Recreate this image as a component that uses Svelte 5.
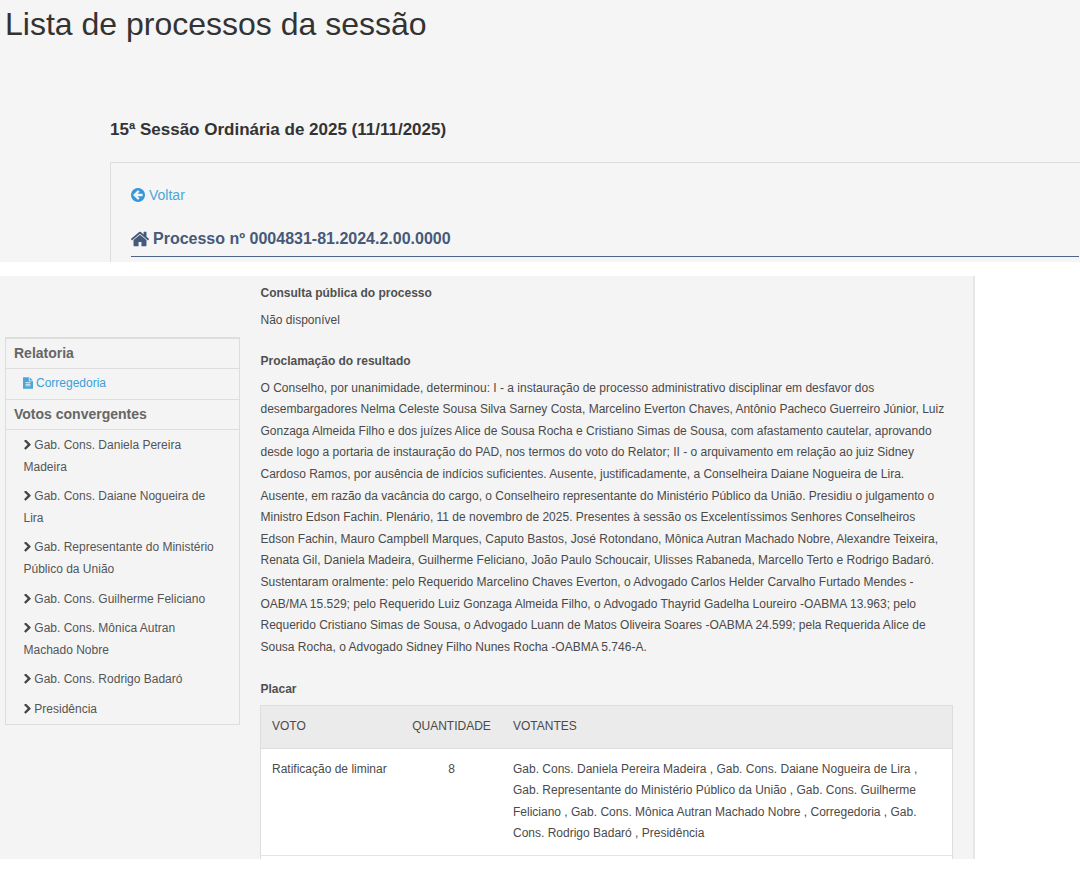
<script lang="ts">
	const convergentes = [
		'Gab. Cons. Daniela Pereira Madeira',
		'Gab. Cons. Daiane Nogueira de Lira',
		'Gab. Representante do Ministério Público da União',
		'Gab. Cons. Guilherme Feliciano',
		'Gab. Cons. Mônica Autran Machado Nobre',
		'Gab. Cons. Rodrigo Badaró',
		'Presidência'
	];

	const proclamacao = 'O Conselho, por unanimidade, determinou: I - a instauração de processo administrativo disciplinar em desfavor dos desembargadores Nelma Celeste Sousa Silva Sarney Costa, Marcelino Everton Chaves, Antônio Pacheco Guerreiro Júnior, Luiz Gonzaga Almeida Filho e dos juízes Alice de Sousa Rocha e Cristiano Simas de Sousa, com afastamento cautelar, aprovando desde logo a portaria de instauração do PAD, nos termos do voto do Relator; II - o arquivamento em relação ao juiz Sidney Cardoso Ramos, por ausência de indícios suficientes. Ausente, justificadamente, a Conselheira Daiane Nogueira de Lira. Ausente, em razão da vacância do cargo, o Conselheiro representante do Ministério Público da União. Presidiu o julgamento o Ministro Edson Fachin. Plenário, 11 de novembro de 2025. Presentes à sessão os Excelentíssimos Senhores Conselheiros Edson Fachin, Mauro Campbell Marques, Caputo Bastos, José Rotondano, Mônica Autran Machado Nobre, Alexandre Teixeira, Renata Gil, Daniela Madeira, Guilherme Feliciano, João Paulo Schoucair, Ulisses Rabaneda, Marcello Terto e Rodrigo Badaró. Sustentaram oralmente: pelo Requerido Marcelino Chaves Everton, o Advogado Carlos Helder Carvalho Furtado Mendes -OAB/MA 15.529; pelo Requerido Luiz Gonzaga Almeida Filho, o Advogado Thayrid Gadelha Loureiro -OABMA 13.963; pelo Requerido Cristiano Simas de Sousa, o Advogado Luann de Matos Oliveira Soares -OABMA 24.599; pela Requerida Alice de Sousa Rocha, o Advogado Sidney Filho Nunes Rocha -OABMA 5.746-A.';

	const votantes = 'Gab. Cons. Daniela Pereira Madeira , Gab. Cons. Daiane Nogueira de Lira , Gab. Representante do Ministério Público da União , Gab. Cons. Guilherme Feliciano , Gab. Cons. Mônica Autran Machado Nobre , Corregedoria , Gab. Cons. Rodrigo Badaró , Presidência';
</script>

<div class="top">
	<h1>Lista de processos da sessão</h1>
	<h2>15ª Sessão Ordinária de 2025 (11/11/2025)</h2>
	<div class="box">
		<a class="back" href="#voltar">
			<svg viewBox="128 128 1536 1536"><path d="M1408 960v-128q0-26-19-45t-45-19h-502l189-189q19-19 19-45t-19-45l-91-91q-18-18-45-18t-45 18l-362 362-91 91q-18 18-18 45t18 45l91 91 362 362q18 18 45 18t45-18l91-91q18-18 18-45t-18-45l-189-189h502q26 0 45-19t19-45zm256-64q0 209-103 385.500t-279.500 279.500-385.500 103-385.500-103-279.500-279.500-103-385.500 103-385.500 279.500-279.500 385.500-103 385.500 103 279.500 279.500 103 385.500z"/></svg>
			Voltar
		</a>
		<h3>
			<svg viewBox="96 192 1600 1400"><path d="M1472 992v480q0 26-19 45t-45 19h-384v-384h-256v384h-384q-26 0-45-19t-19-45v-480q0-1 .5-3t.5-3l575-474 575 474q1 2 1 6zm223-69l-62 74q-8 9-21 11h-3q-13 0-21-7l-692-577-692 577q-12 8-24 7-13-2-21-11l-62-74q-8-10-7-23.500t11-21.500l719-599q32-26 76-26t76 26l244 204v-195q0-14 9-23t23-9h192q14 0 23 9t9 23v408l219 182q10 8 11 21.500t-7 23.500z"/></svg>
			Processo nº 0004831-81.2024.2.00.0000
		</h3>
	</div>
</div>

<div class="bottom">
	<aside>
		<div class="panel">
			<div class="heading">Relatoria</div>
			<div class="rel">
				<a href="#corregedoria">
					<svg viewBox="128 0 1536 1792"><path d="M1596 476q14 14 28 36h-472v-472q22 14 36 28zm-476 164h544v1056q0 40-28 68t-68 28h-1344q-40 0-68-28t-28-68v-1600q0-40 28-68t68-28h800v544q0 40 28 68t68 28zm160 736v-64q0-14-9-23t-23-9h-704q-14 0-23 9t-9 23v64q0 14 9 23t23 9h704q14 0 23-9t9-23zm0-256v-64q0-14-9-23t-23-9h-704q-14 0-23 9t-9 23v64q0 14 9 23t23 9h704q14 0 23-9t9-23zm0-256v-64q0-14-9-23t-23-9h-704q-14 0-23 9t-9 23v64q0 14 9 23t23 9h704q14 0 23-9t9-23z"/></svg>Corregedoria
				</a>
			</div>
			<div class="heading">Votos convergentes</div>
			<ul>
				{#each convergentes as nome}
					<li>
						<svg viewBox="320 128 1100 1536"><path d="M1363 877l-742 742q-19 19-45 19t-45-19l-166-166q-19-19-19-45t19-45l531-531-531-531q-19-19-19-45t19-45l166-166q19-19 45-19t45 19l742 742q19 19 19 45t-19 45z"/></svg>
						{nome}
					</li>
				{/each}
			</ul>
		</div>
	</aside>

	<main>
		<h4>Consulta pública do processo</h4>
		<p>Não disponível</p>
		<h4 class="gap">Proclamação do resultado</h4>
		<p class="texto">{proclamacao}</p>
		<h4 class="placar">Placar</h4>
		<table>
			<thead>
				<tr>
					<th class="voto">VOTO</th>
					<th class="qtd">QUANTIDADE</th>
					<th>VOTANTES</th>
				</tr>
			</thead>
			<tbody>
				<tr>
					<td>Ratificação de liminar</td>
					<td class="center">8</td>
					<td>{votantes}</td>
				</tr>
				<tr>
					<td colspan="3">&nbsp;</td>
				</tr>
			</tbody>
		</table>
	</main>
</div>

<style>
	:global(body) {
		background: #fff;
		font-family: "Liberation Sans", Arial, sans-serif;
	}

	.top {
		height: 262px;
		overflow: hidden;
		background: #f5f5f5;
		padding-left: 5px;
		box-sizing: border-box;
	}

	h1 {
		margin: 0;
		font-size: 32px;
		font-weight: 400;
		line-height: 48px;
		color: #333;
	}

	h2 {
		margin: 71px 0 0 105px;
		font-size: 17px;
		font-weight: 700;
		line-height: 22px;
		color: #333;
	}

	.box {
		margin: 21px 0 0 105px;
		padding: 22px 1px 30px 20px;
		border: 1px solid #ddd;
		border-right: 0;
	}

	.back {
		display: flex;
		align-items: center;
		gap: 4px;
		font-size: 14px;
		line-height: 20px;
		color: #4ba6d8;
		text-decoration: none;
	}

	.back svg {
		fill: #3498db;
		width: 14px;
		height: 14px;
	}

	h3 {
		display: flex;
		align-items: center;
		gap: 4px;
		margin: 23px 0 0;
		padding-bottom: 6px;
		font-size: 16px;
		font-weight: 700;
		line-height: 22px;
		color: #46597a;
		border-bottom: 1px solid #50638a;
	}

	h3 svg {
		fill: #46597a;
		width: 18px;
		height: 16px;
	}

	.bottom {
		display: flex;
		height: 583px;
		margin-top: 14px;
		overflow: hidden;
		width: 975px;
		background: #f4f4f4;
		border-right: 2px solid #e6e6e6;
		box-sizing: border-box;
	}

	aside {
		flex: none;
		width: 235px;
		margin-left: 5px;
		padding-top: 61px;
		font-size: 12px;
		color: #555;
	}

	.panel {
		border: 1px solid #ddd;
		border-top-width: 2px;
	}

	.heading {
		padding: 0 8px;
		font-size: 14px;
		font-weight: 700;
		line-height: 29px;
		color: #666;
		background: #f4f4f4;
	}

	.heading + .rel,
	.heading + ul {
		border-top: 1px solid #ddd;
	}

	.rel {
		padding: 0 17px 1px;
		line-height: 29px;
		border-bottom: 1px solid #ddd;
	}

	.rel a {
		color: #3aa0d8;
		text-decoration: none;
	}

	.rel svg {
		fill: #4ba6d8;
		vertical-align: -2px;
		margin-right: 3px;
		width: 10px;
		height: 12px;
	}

	ul {
		list-style: none;
		margin: 0;
		padding: 1px 18px 0 17.5px;
	}

	li {
		padding: 4px 0;
		line-height: 21.6px;
	}

	li:last-child {
		padding-bottom: 3px;
	}

	li svg {
		fill: #444;
		vertical-align: -1px;
		margin-left: 0.5px;
		width: 7px;
		height: 10px;
	}

	main {
		flex: none;
		width: 733px;
		box-sizing: border-box;
		padding: 7px 20px 0 20.5px;
		font-size: 12px;
		line-height: 21.6px;
		color: #4a4a4a;
	}

	h4 {
		margin: 0;
		font-size: 12px;
		font-weight: 700;
		line-height: 20px;
		color: #505050;
	}

	h4.gap {
		margin-top: 19px;
	}

	h4.placar {
		margin-top: 21px;
	}

	p {
		margin: 7px 0 0;
	}

	p.texto {
		max-width: 690px;
	}

	table {
		width: 693px;
		margin: 6px 0 0 -0.5px;
		border-collapse: collapse;
		table-layout: fixed;
		background: #fff;
	}

	th,
	td {
		padding: 10px 11px 11px;
		border: 1px solid #e4e4e4;
		border-width: 1px 0;
		text-align: left;
		vertical-align: top;
		font-weight: 400;
		line-height: 21.4px;
		color: #4a4a4a;
	}

	th {
		background: #ebebeb;
		border-color: #ddd;
		padding: 10px 11px;
	}

	td:first-child,
	th:first-child {
		border-left: 1px solid #ddd;
	}

	td:last-child,
	th:last-child {
		border-right: 1px solid #ddd;
	}

	.voto {
		width: 118px;
	}

	.qtd {
		width: 79px;
		text-align: center;
	}

	.center {
		text-align: center;
	}
</style>
